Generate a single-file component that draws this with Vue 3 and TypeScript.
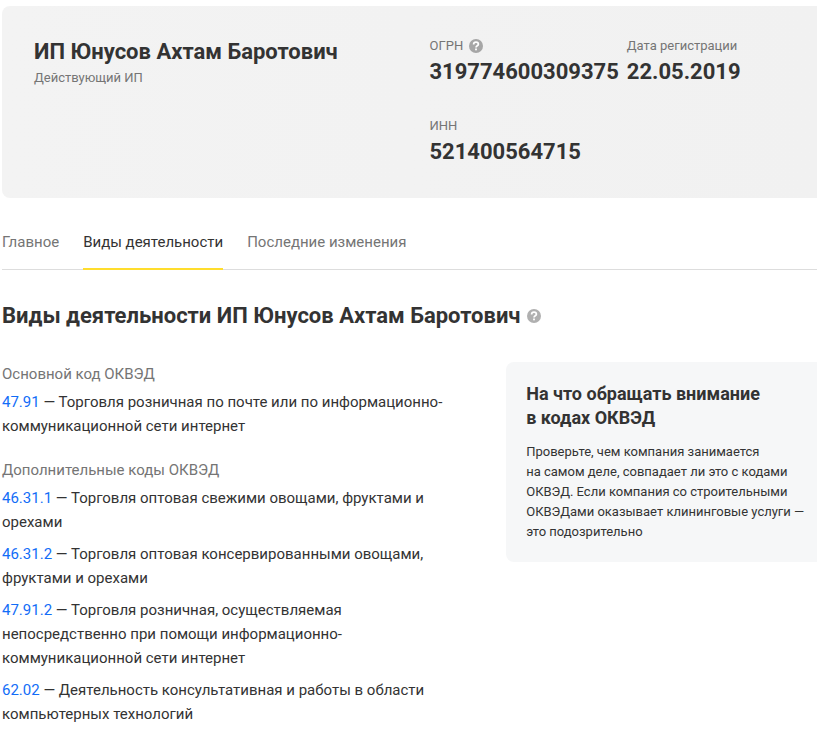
<script setup lang="ts">
interface Tab {
  label: string
  href: string
  active: boolean
}

interface Activity {
  code: string
  name: string
}

interface ActivityGroup {
  title: string
  items: Activity[]
}

const owner = 'ИП Юнусов Ахтам Баротович'

const tabs: Tab[] = [
  { label: 'Главное', href: '#main', active: false },
  { label: 'Виды деятельности', href: '#activities', active: true },
  { label: 'Последние изменения', href: '#changes', active: false },
]

const groups: ActivityGroup[] = [
  {
    title: 'Основной код ОКВЭД',
    items: [
      { code: '47.91', name: 'Торговля розничная по почте или по информационно-коммуникационной сети интернет' },
    ],
  },
  {
    title: 'Дополнительные коды ОКВЭД',
    items: [
      { code: '46.31.1', name: 'Торговля оптовая свежими овощами, фруктами и орехами' },
      { code: '46.31.2', name: 'Торговля оптовая консервированными овощами, фруктами и орехами' },
      { code: '47.91.2', name: 'Торговля розничная, осуществляемая непосредственно при помощи информационно-коммуникационной сети интернет' },
      { code: '62.02', name: 'Деятельность консультативная и работы в области компьютерных технологий' },
    ],
  },
]
</script>

<template>
  <div class="page">
    <header class="card">
      <div class="identity">
        <h1 class="name">{{ owner }}</h1>
        <p class="status">Действующий ИП</p>
      </div>
      <dl class="facts">
        <div class="fact">
          <dt class="fact-label">
            ОГРН
            <button class="hint" type="button">
              <svg class="hint-icon" viewBox="0 0 14 14" aria-hidden="true">
                <circle cx="7" cy="7" r="7" fill="#a6a6a6" />
                <path d="M4.6 5.5C4.6 4 5.6 3.2 7 3.2s2.4.8 2.4 2.1C9.4 6.8 7 6.8 7 8.5" fill="none" stroke="#fff" stroke-width="1.7" />
                <rect x="6.1" y="9.5" width="1.8" height="1.8" fill="#fff" />
              </svg>
            </button>
          </dt>
          <dd class="fact-value">319774600309375</dd>
        </div>
        <div class="fact">
          <dt class="fact-label">Дата регистрации</dt>
          <dd class="fact-value">22.05.2019</dd>
        </div>
        <div class="fact">
          <dt class="fact-label">ИНН</dt>
          <dd class="fact-value">521400564715</dd>
        </div>
      </dl>
    </header>

    <nav class="tabs">
      <a v-for="tab in tabs" :key="tab.href" :href="tab.href" class="tab" :class="{ active: tab.active }">{{ tab.label }}</a>
    </nav>

    <main>
      <h2 class="title">
        Виды деятельности {{ owner }}
        <button class="hint" type="button">
          <svg class="hint-icon" viewBox="0 0 14 14" aria-hidden="true">
            <circle cx="7" cy="7" r="7" fill="#b0b0b0" />
            <path d="M4.6 5.5C4.6 4 5.6 3.2 7 3.2s2.4.8 2.4 2.1C9.4 6.8 7 6.8 7 8.5" fill="none" stroke="#fff" stroke-width="1.7" />
            <rect x="6.1" y="9.5" width="1.8" height="1.8" fill="#fff" />
          </svg>
        </button>
      </h2>

      <div class="content">
        <div class="groups">
          <section v-for="group in groups" :key="group.title">
            <h3 class="group-title">{{ group.title }}</h3>
            <ul class="list">
              <li v-for="item in group.items" :key="item.code">
                <a class="code" :href="'#' + item.code">{{ item.code }}</a> — {{ item.name }}
              </li>
            </ul>
          </section>
        </div>

        <aside class="note">
          <h3 class="note-title">На что обращать внимание<br>в кодах ОКВЭД</h3>
          <p class="note-text">
            Проверьте, чем компания занимается на&nbsp;самом деле, совпадает ли это с&nbsp;кодами ОКВЭД.
            Если компания со&nbsp;строительными ОКВЭДами оказывает клининговые услуги&nbsp;— это&nbsp;подозрительно
          </p>
        </aside>
      </div>
    </main>
  </div>
</template>

<style>
body {
  background: #fff;
}
</style>

<style scoped>
.page {
  padding: 6px 0 8px 2px;
  font-family: Roboto, "Liberation Sans", sans-serif;
  font-size: 15px;
  line-height: 24px;
  color: #333;
}

h1, h2, h3, p, dl, dd, ul {
  margin: 0;
  padding: 0;
}

.card {
  display: grid;
  grid-template-columns: 1fr 1fr;
  column-gap: 16px;
  padding: 30px 8px 30px 32px;
  border-radius: 8px 0 0 8px;
  background: linear-gradient(90deg, #f3f3f3, #f1f1f1);
}

.name,
.title,
.fact-value {
  font-size: 22px;
  line-height: 32px;
  font-weight: 700;
}

.status {
  font-size: 13px;
  line-height: 20px;
  color: #757575;
}

.facts {
  display: grid;
  grid-template-columns: max-content max-content;
  gap: 28px 8px;
}

.fact-label {
  display: flex;
  align-items: center;
  gap: 6px;
  font-size: 13px;
  line-height: 20px;
  color: #757575;
}

.hint {
  display: inline-flex;
  padding: 0;
  border: 0;
  background: none;
  cursor: pointer;
}

.hint-icon {
  width: 14px;
  height: 14px;
}

.tabs {
  display: flex;
  gap: 24px;
  margin-top: 24px;
  box-shadow: inset 0 -1px #ddd;
}

.tab {
  padding: 8px 0 14px;
  border-bottom: 2px solid transparent;
  color: #757575;
  text-decoration: none;
}

.tab.active {
  border-bottom-color: #ffdd2d;
  color: #333;
}

.title {
  display: flex;
  align-items: center;
  gap: 6px;
  margin-top: 30px;
}

.content {
  display: grid;
  grid-template-columns: 3fr 2fr;
  align-items: start;
  column-gap: 38px;
  margin-top: 30px;
}

.groups {
  display: grid;
  row-gap: 20px;
}

.group-title {
  font-size: 15px;
  line-height: 24px;
  font-weight: 400;
  color: #757575;
}

.list {
  display: grid;
  row-gap: 8px;
  margin-top: 4px;
  list-style: none;
}

.code {
  color: #126df7;
  text-decoration: none;
}

.note {
  padding: 20px 8px 20px 20px;
  border-radius: 8px 0 0 8px;
  background: #f6f7f8;
}

.note-title {
  font-size: 18px;
  line-height: 24px;
  font-weight: 700;
}

.note-text {
  margin-top: 12px;
  font-size: 13px;
  line-height: 20px;
}
</style>
